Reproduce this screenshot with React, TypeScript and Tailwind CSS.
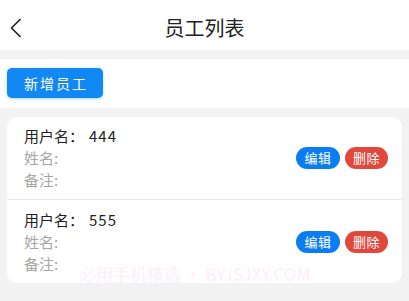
type Employee = {
  username: string;
  name: string;
  note: string;
};

const EMPLOYEES: Employee[] = [
  { username: '444', name: '', note: '' },
  { username: '555', name: '', note: '' },
];

function BackIcon() {
  return (
    <svg width="13" height="20" viewBox="0 0 13 20" fill="none" aria-hidden>
      <path d="M11 1.5 2.5 10 11 18.5" stroke="#222" strokeWidth="1.7" strokeLinecap="round" strokeLinejoin="round" />
    </svg>
  );
}

function EmployeeRow({ emp, last }: { emp: Employee; last: boolean }) {
  return (
    <div
      className={[
        'flex h-[83px] items-center justify-between pl-[17px] pr-[14px]',
        last ? '' : 'border-b border-[#e8e8e8]',
      ].join(' ')}
    >
      <div className="flex flex-col text-[15px] leading-[22px]">
        <p className="text-[#222]">
          用户名：<span className="ml-[5px] tracking-[1px]">{emp.username}</span>
        </p>
        <p className="text-[#a6a6a6]">姓名:{emp.name}</p>
        <p className="text-[#a6a6a6]">备注:{emp.note}</p>
      </div>
      <div className="flex items-center gap-[5px]">
        <button
          type="button"
          className="flex h-[22px] w-[44px] items-center justify-center rounded-full bg-[#0b7df0] text-[13px] tracking-[0.5px] text-white"
        >
          编辑
        </button>
        <button
          type="button"
          className="flex h-[22px] w-[43px] items-center justify-center rounded-full bg-[#e0483e] text-[13px] tracking-[0.5px] text-white"
        >
          删除
        </button>
      </div>
    </div>
  );
}

export default function App() {
  return (
    <div className="flex h-[301px] w-[409px] flex-col overflow-hidden bg-[#f2f2f2] font-['Noto_Sans_CJK_SC','Noto_Sans',sans-serif]">
      {/* Header */}
      <header className="grid h-[50px] shrink-0 grid-cols-[40px_1fr_40px] items-center bg-white">
        <div className="flex items-center pl-[9px] pt-[6px]">
          <BackIcon />
        </div>
        <h1 className="pt-[6px] text-center text-[20px] leading-none text-[#222]">员工列表</h1>
        <div />
      </header>

      {/* Toolbar */}
      <div className="mt-[9px] shrink-0 bg-white pb-[10px] pl-[7px] pt-[9px]">
        <button
          type="button"
          className="flex h-[30px] w-[96px] items-center justify-center rounded-[5px] bg-[#1288f5] pl-[2px] text-[14px] tracking-[2px] text-white shadow-[0_1px_3px_rgba(18,136,245,0.35)]"
        >
          新增员工
        </button>
      </div>

      {/* List */}
      <div className="px-[7px] pt-[9px]">
        <div className="relative rounded-[10px] bg-white">
          {EMPLOYEES.map((emp, i) => (
            <EmployeeRow key={emp.username} emp={emp} last={i === EMPLOYEES.length - 1} />
          ))}
          <p className="pointer-events-none absolute bottom-[-3px] left-[72px] whitespace-nowrap text-[17px] text-[#fdeef8]">
            必用手机精选 • BYJSJXY.COM
          </p>
        </div>
      </div>
    </div>
  );
}
